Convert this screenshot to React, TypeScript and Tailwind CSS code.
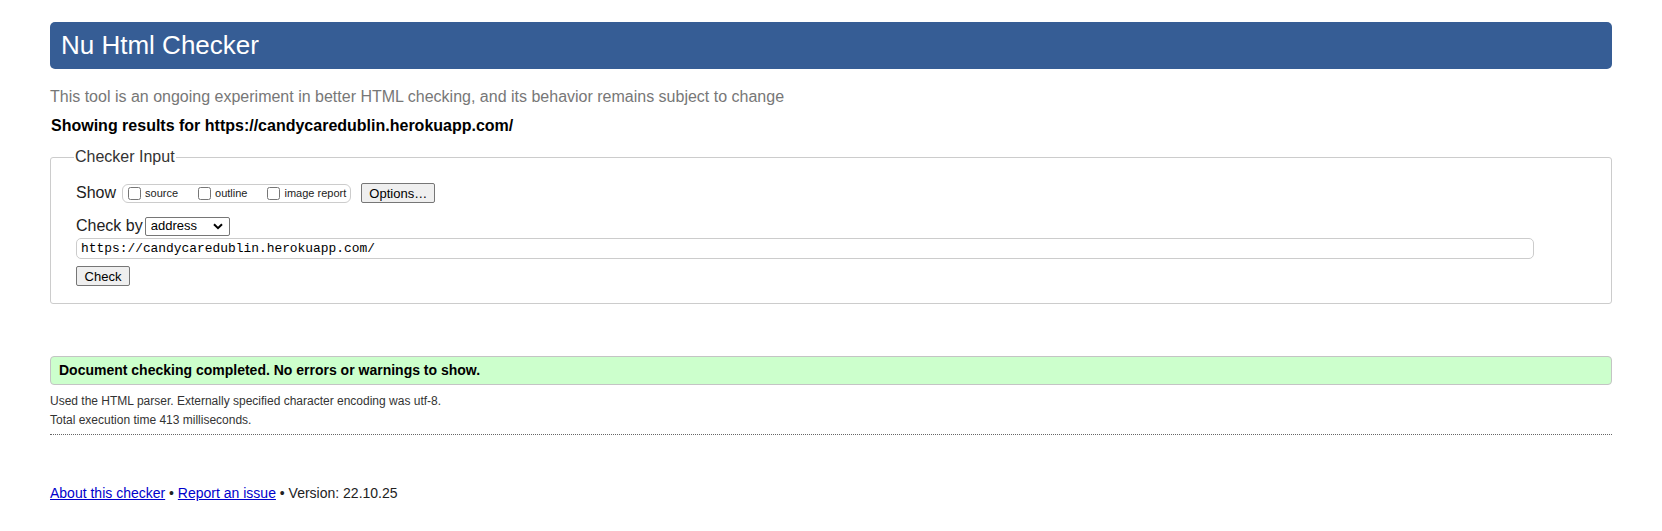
export default function App() {
  return (
    <div className="min-h-[531px] bg-white px-[50px] pt-[22px] font-['Liberation_Sans',Arial,sans-serif] text-black">
      <h1 className="flex h-[47px] items-center rounded-[5px] bg-[#365d95] pl-[11px] text-[26px] text-white">
        Nu Html Checker
      </h1>

      <p className="mt-[19px] text-[16px] leading-[18px] text-[#777]">
        This tool is an ongoing experiment in better HTML checking, and its behavior remains subject to change
      </p>

      <p className="mt-[11px] pl-px text-[16px] font-bold leading-[18px]">
        Showing results for https://candycaredublin.herokuapp.com/
      </p>

      <fieldset className="mt-[13px] rounded-[3px] border border-[#ccc] px-[25px] pb-[15px] pt-[15px]">
        <legend className="-ml-[2px] px-px text-[16px] leading-[18px] text-[#333]">Checker Input</legend>

        <div className="flex items-center text-[16px] text-[#222]">
          <span className="mr-[6px]">Show</span>
          <div className="flex h-[19px] items-center rounded-[6px] border border-[#ccc] pl-[5px] pr-[4px] text-[11px]">
            <label className="flex items-center">
              <input type="checkbox" className="mr-[4px] h-[13px] w-[13px]" />
              source
            </label>
            <label className="ml-[20px] flex items-center">
              <input type="checkbox" className="mr-[4px] h-[13px] w-[13px]" />
              outline
            </label>
            <label className="ml-[20px] flex items-center">
              <input type="checkbox" className="mr-[4px] h-[13px] w-[13px]" />
              image report
            </label>
          </div>
          <button className="ml-[10px] h-[20px] w-[74px] rounded-[2px] border border-[#767676] bg-[#efefef] text-[13px] text-black">
            Options…
          </button>
        </div>

        <div className="mt-[9px] flex items-center text-[16px] text-[#222]">
          <span className="mr-[2px]">Check by</span>
          <div className="flex h-[19px] w-[85px] items-center justify-between rounded-[2px] border border-[#767676] bg-white pl-[5px] pr-[6px] text-[13px] text-black">
            <span>address</span>
            <svg width="10" height="7" viewBox="0 0 10 7" fill="none" stroke="#000" strokeWidth="2">
              <path d="M1 1.2l4 4 4-4" />
            </svg>
          </div>
        </div>

        <div className="mt-0 flex h-[21px] w-[1458px] items-center rounded-[5px] border border-[#ccc] pl-[4px] font-['Liberation_Mono','DejaVu_Sans_Mono',monospace] text-[12.9px] text-black">
          https://candycaredublin.herokuapp.com/
        </div>

        <button className="mt-[7px] h-[20px] w-[54px] rounded-[2px] border border-[#767676] bg-[#efefef] text-[13px] text-black">
          Check
        </button>
      </fieldset>

      <div className="mt-[52px] flex h-[29px] items-center rounded-[4px] border border-[#c4c4c4] bg-[#ccffcc] pl-[8px] text-[14px] font-bold">
        Document checking completed. No errors or warnings to show.
      </div>

      <div className="border-b border-dotted border-[#666] pb-[7px] text-[12px] text-[#333]">
        <p className="mt-[9px] leading-[14px]">Used the HTML parser. Externally specified character encoding was utf-8.</p>
        <p className="mt-[5px] leading-[14px]">Total execution time 413 milliseconds.</p>
      </div>

      <p className="mt-[48px] text-[14px] text-[#222]">
        <a href="#" className="text-[#00c] underline">About this checker</a>
        {" • "}
        <a href="#" className="text-[#00c] underline">Report an issue</a>
        {" • Version: 22.10.25"}
      </p>
    </div>
  );
}
